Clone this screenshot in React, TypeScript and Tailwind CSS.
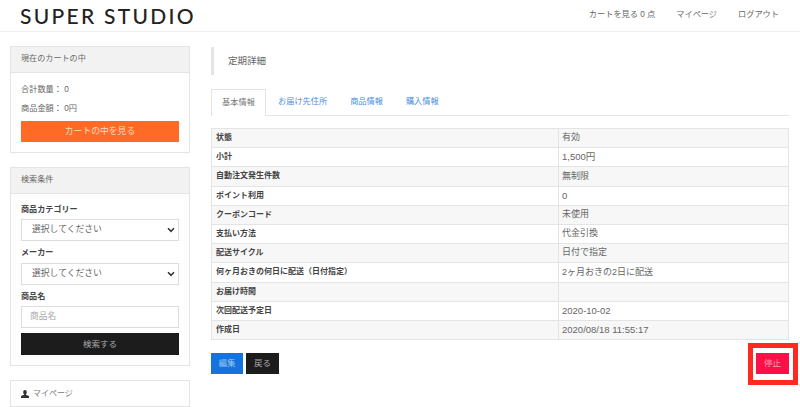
const jp = "font-['Liberation_Sans','Noto_Sans_CJK_JP',sans-serif]";

const ROWS: [string, string][] = [
  ["状態", "有効"],
  ["小計", "1,500円"],
  ["自動注文発生件数", "無制限"],
  ["ポイント利用", "0"],
  ["クーポンコード", "未使用"],
  ["支払い方法", "代金引換"],
  ["配送サイクル", "日付で指定"],
  ["何ヶ月おきの何日に配送（日付指定）", "2ヶ月おきの2日に配送"],
  ["お届け時間", ""],
  ["次回配送予定日", "2020-10-02"],
  ["作成日", "2020/08/18 11:55:17"],
];

function Select({ label }: { label: string }) {
  return (
    <div className="flex h-[22px] items-center justify-between border border-[#ddd] bg-white pl-[10px] pr-[3px] text-[8.8px] text-[#666]">
      <span>{label}</span>
      <svg width="8" height="6" viewBox="0 0 9 7" fill="none" stroke="#333" strokeWidth="1.8">
        <path d="M1 1.500l3.500 3.500L8 1.500" />
      </svg>
    </div>
  );
}

function SideCard({ title, children }: { title: string; children: React.ReactNode }) {
  return (
    <section className="border border-[#e4e4e4] bg-white">
      <h2 className="flex h-[26px] items-center border-b border-[#e4e4e4] bg-[#f2f2f2] px-[10px] text-[8.1px] font-normal text-[#666]">
        {title}
      </h2>
      {children}
    </section>
  );
}

export default function App() {
  return (
    <div className={`${jp} h-[407px] w-[800px] overflow-hidden bg-white text-[#555]`}>
      <header className="flex h-8 items-center justify-between border-b border-[#eee] pl-5 pr-[21px]">
        <div className="font-['Lato',sans-serif] text-[21px] font-medium leading-none tracking-[2.3px] text-[#222]">
          SUPER STUDIO
        </div>
        <nav className="flex gap-[21px] text-[8.2px] text-[#666]">
          <span>カートを見る 0 点</span>
          <span>マイページ</span>
          <span>ログアウト</span>
        </nav>
      </header>

      <div className="flex gap-[21px] pl-[10px] pr-[11px] pt-[14px]">
        <aside className="flex w-[180px] shrink-0 flex-col">
          <SideCard title="現在のカートの中">
            <div className="px-[10px] pt-[7px] text-[8.2px] text-[#666]">
              <p className="h-[19px] leading-[19px]">合計数量： 0</p>
              <p className="h-[19px] leading-[19px]">商品金額： 0円</p>
              <button className="mb-[10px] mt-[3px] block h-[21px] w-full bg-[#ff6b26] text-[8.8px] text-[#ffd9c4]">
                カートの中を見る
              </button>
            </div>
          </SideCard>

          <div className="mt-[14px]">
            <SideCard title="検索条件">
              <div className="px-[10px] pb-[10px] pt-[10px]">
                <p className="mb-[3px] text-[8.1px] font-bold leading-[12px] text-[#444]">商品カテゴリー</p>
                <Select label="選択してください" />
                <p className="mb-[4px] mt-[6px] text-[8.1px] font-bold leading-[12px] text-[#444]">メーカー</p>
                <Select label="選択してください" />
                <p className="mb-[3px] mt-[6px] text-[8.1px] font-bold leading-[12px] text-[#444]">商品名</p>
                <div className="flex h-[22px] items-center border border-[#ddd] px-2 text-[8.7px] text-[#aaa]">商品名</div>
                <button className="mt-[5px] block h-[22px] w-full bg-[#1c1c1c] text-[8.5px] text-[#aaa]">検索する</button>
              </div>
            </SideCard>
          </div>

          <div className="mt-[14px] flex h-[27px] shrink-0 items-center gap-[4px] border border-[#e4e4e4] px-[10px] text-[8px] text-[#777]">
            <svg width="8" height="8" viewBox="0 0 9 9" fill="#333">
              <path d="M4.500 0C3.200 0 2.500 1 2.500 2.400c0 1 .4 1.900 1 2.300v.7L.7 6.600C.3 6.800 0 7.100 0 7.600V9h9V7.600c0-.5-.3-.8-.7-1L5.500 5.400v-.7c.6-.4 1-1.300 1-2.300C6.500 1 5.800 0 4.500 0z" />
            </svg>
            <span>マイページ</span>
          </div>
        </aside>

        <main className="min-w-0 flex-1">
          <div className="mt-[1px] flex h-[28px] items-center border-l-[3px] border-[#e4e4e4] pl-[14px] text-[9.5px] text-[#666]">
            定期詳細
          </div>

          <div className="mt-[14px] flex h-[27px] items-end border-b border-[#e4e4e4] text-[8.2px]">
            <div className="mb-[-1px] flex h-[27px] w-[55px] items-center justify-center border border-b-0 border-[#e4e4e4] bg-white text-[#777]">
              基本情報
            </div>
            <div className="flex h-[26px] items-center gap-[23px] pl-[12px] text-[#4a90e2]">
              <span>お届け先住所</span>
              <span>商品情報</span>
              <span>購入情報</span>
            </div>
          </div>

          <table className="mt-3 w-full table-fixed border-collapse border border-[#e4e4e4] text-[8px]">
            <colgroup>
              <col className="w-[347px]" />
              <col />
            </colgroup>
            <tbody>
              {ROWS.map(([name, value], i) => (
                <tr key={name} className={`h-[19.2px] ${i % 2 === 0 ? "bg-[#f7f7f7]" : "bg-white"}`}>
                  <th className="border border-[#e4e4e4] px-[4px] py-0 text-left font-bold text-[#444]">{name}</th>
                  <td
                    className={`border border-[#e4e4e4] px-[3px] py-0 text-[#666] ${
                      /^[\d,/:\- ]+円?$/.test(value) ? "text-[9.5px]" : "text-[9px]"
                    }`}
                  >
                    {value}
                  </td>
                </tr>
              ))}
            </tbody>
          </table>

          <div className="mt-[13px] flex justify-between">
            <div className="flex gap-[3px]">
              <button className="h-[21px] w-[32px] bg-[#1573de] text-[8.5px] text-[#9cc6f2]">編集</button>
              <button className="h-[21px] w-[33px] bg-[#1c1c1c] text-[8.5px] text-[#aaa]">戻る</button>
            </div>
            <button className="relative h-[21px] w-[33px] bg-[#ff0f47] text-[8.5px] text-[#ff9cb3]">
              停止
              <span className="absolute bottom-[-11px] left-[-8px] right-[-9px] top-[-10px] border-[5px] border-[#ff2a1f]" />
            </button>
          </div>
        </main>
      </div>
    </div>
  );
}
